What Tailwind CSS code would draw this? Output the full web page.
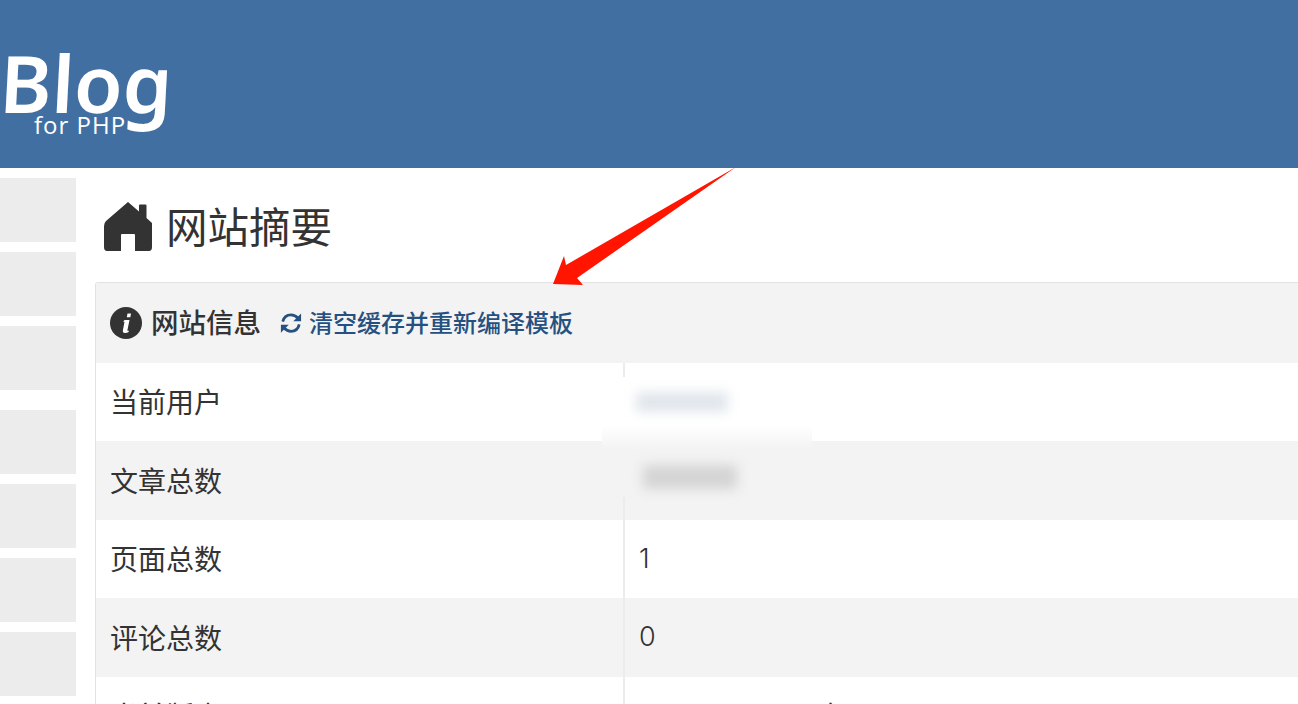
<!DOCTYPE html>
<html lang="zh">
<head>
<meta charset="utf-8">
<script src="https://cdn.jsdelivr.net/npm/@tailwindcss/browser@4"></script>
<title>Blog for PHP</title>
</head>
<body class="bg-white overflow-hidden h-[704px] font-['Noto_Sans','Noto_Sans_CJK_SC',sans-serif] text-[#333]">
<header class="h-[168px] bg-[#416fa2] relative overflow-hidden">
  <div class="absolute left-[34px] top-[110px] text-white text-[24px] leading-[30px] font-['Open_Sans',sans-serif] tracking-[1px]">for PHP</div>
  <div class="absolute left-[0px] top-[28px] text-white font-semibold text-[79px] leading-[110px] font-['Noto_Sans',sans-serif] -skew-x-3">Blog</div>
</header>
<div class="flex">
  <aside class="w-[76px] shrink-0 pt-[10px] flex flex-col">
    <div class="h-16 bg-[#ececec] mb-[10px]"></div>
    <div class="h-16 bg-[#ececec] mb-[10px]"></div>
    <div class="h-16 bg-[#ececec] mb-5"></div>
    <div class="h-16 bg-[#ececec] mb-[10px]"></div>
    <div class="h-16 bg-[#ececec] mb-[10px]"></div>
    <div class="h-16 bg-[#ececec] mb-[10px]"></div>
    <div class="h-16 bg-[#ececec]"></div>
  </aside>
  <main class="flex-1 min-w-0 pl-[19px]">
    <div class="h-[114px] flex items-center pl-[9px] pt-[3px] gap-[14px]">
      <svg class="w-[48px] h-[49px]" viewBox="0 0 48 49"><path fill="#333" d="M24 0 L35 9.500 V3.500 Q35 2.500 36 2.500 H41.500 Q42.500 2.500 42.500 3.500 V16 L48 21 V45 Q48 49 45 49 H31 V33 Q31 32 30 32 H18 Q17 32 17 33 V49 H3 Q0 49 0 45 V24 Q0 21 2 19 Z"/></svg>
      <h1 class="text-[41.500px] leading-[48px] font-normal">网站摘要</h1>
    </div>
    <section class="border border-[#e2e2e2] border-r-0 rounded-tl-[3px] border-b-0">
      <div class="h-[80px] bg-[#f3f3f3] flex items-center pl-[14px]">
        <svg class="w-8 h-8" viewBox="0 0 32 32"><circle cx="16" cy="16" r="16" fill="#333"/><path fill="#fff" d="M17.500 6.500h3.500l-.7 3.800h-3.500zM14.500 13h5l-2.100 10.200c-.1.600.3.800 1.500.3l-.3 1.500c-1.200.700-2.700 1-3.700 1-1.600 0-2.400-1-2-2.800l1.600-8.400h-1.400z"/></svg>
        <span class="ml-[9px] text-[27.500px] leading-8 font-medium">网站信息</span>
        <a class="ml-[19px] flex items-center text-[#25507f] text-[24px] leading-8 font-medium">
          <svg class="w-[22px] h-[22px] mr-[7px]" viewBox="0 0 24 24" fill="none" stroke="#25507f" stroke-width="3"><path d="M3 10.500C4 6 7.500 3 12 3c3 0 5.500 1.300 7.500 3.500"/><path d="M21 13.500C20 18 16.500 21 12 21c-3 0-5.500-1.300-7.500-3.500"/><path fill="#25507f" stroke="none" d="M23 1.500V10h-8.500zM1 22.500V14h8.500z"/></svg>
          清空缓存并重新编译模板
        </a>
      </div>
      <table class="w-full border-collapse text-[28px] text-[#333]">
        <tbody>
          <tr class="h-[78px] bg-white"><td class="w-[528px] pl-[14px] border-r-2 border-[#ececec]">当前用户</td><td class="pl-[14px]"></td></tr>
          <tr class="h-[79px] bg-[#f3f3f3]"><td class="pl-[14px] border-r-2 border-[#ececec]">文章总数</td><td class="pl-[14px]"></td></tr>
          <tr class="h-[78px] bg-white"><td class="pl-[14px] border-r-2 border-[#ececec]">页面总数</td><td class="pl-[14px] font-['Inter',sans-serif] font-light text-[27px]">1</td></tr>
          <tr class="h-[79px] bg-[#f3f3f3]"><td class="pl-[14px] border-r-2 border-[#ececec]">评论总数</td><td class="pl-[14px] font-['Inter',sans-serif] font-light text-[27px]">0</td></tr>
          <tr class="h-[78px] bg-white"><td class="pl-[14px] border-r-2 border-[#ececec]">当前版本</td><td class="pl-[14px]"><span class="ml-[26px]">v7.0.8 (2023年10月12日)</span></td></tr>
        </tbody>
      </table>
    </section>
  </main>
</div>
<!-- redaction and annotation overlays -->
<div class="absolute left-[602px] top-[377px] w-[210px] h-[120px] bg-linear-to-b from-white from-40% to-[#f3f3f3] to-60%"></div>
<div class="absolute left-[636px] top-[392px] w-[92px] h-[20px] bg-[#e1e6ec] blur-[6px]"></div>
<div class="absolute left-[643px] top-[465px] w-[94px] h-[24px] bg-[#d4d4d4] blur-[6px]"></div>
<svg class="absolute left-0 top-0 w-[1298px] h-[704px] pointer-events-none" viewBox="0 0 1298 704"><polygon fill="#ff1500" points="736,167 566,265 564,256 553,284 583,285 577,278"/></svg>
</body>
</html>
